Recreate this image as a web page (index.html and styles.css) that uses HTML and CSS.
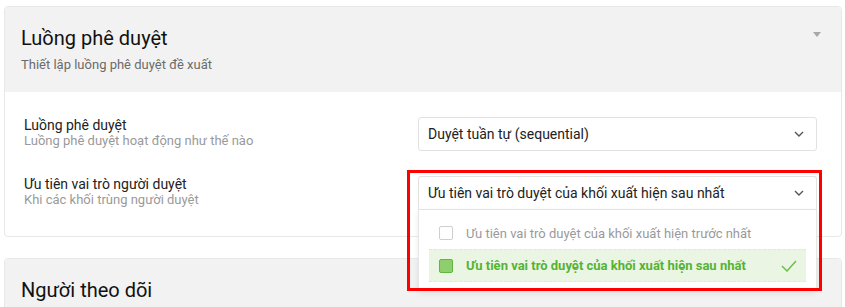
FILE: index.html
```html
<!DOCTYPE html>
<html lang="vi">
<head>
    <meta charset="UTF-8">
    <meta name="viewport" content="width=device-width, initial-scale=1.0">
    <title>Luồng phê duyệt</title>
    <link rel="stylesheet" href="styles.css">
</head>
<body>
    <div class="card">
        <div class="card-header">
            <div>
                <h2>Luồng phê duyệt</h2>
                <p>Thiết lập luồng phê duyệt đề xuất</p>
            </div>
            <span class="caret"></span>
        </div>

        <div class="card-body">
            <div class="field-row">
                <div class="field-label">
                    <div class="label">Luồng phê duyệt</div>
                    <div class="desc">Luồng phê duyệt hoạt động như thế nào</div>
                </div>
                <div class="select">
                    <span>Duyệt tuần tự (sequential)</span>
                    <svg width="10" height="6" viewBox="0 0 10 6"><path d="M1 1l4 4 4-4" fill="none" stroke="#555" stroke-width="1.4"/></svg>
                </div>
            </div>

            <div class="field-row">
                <div class="field-label">
                    <div class="label">Ưu tiên vai trò người duyệt</div>
                    <div class="desc">Khi các khối trùng người duyệt</div>
                </div>
                <div class="select-wrap">
                    <div class="select open">
                        <span>Ưu tiên vai trò duyệt của khối xuất hiện sau nhất</span>
                        <svg width="10" height="6" viewBox="0 0 10 6"><path d="M1 1l4 4 4-4" fill="none" stroke="#555" stroke-width="1.4"/></svg>
                    </div>
                    <div class="dropdown">
                        <div class="option">
                            <span class="check-box"></span>
                            <span class="option-text">Ưu tiên vai trò duyệt của khối xuất hiện trước nhất</span>
                        </div>
                        <div class="option selected">
                            <span class="check-box"></span>
                            <span class="option-text">Ưu tiên vai trò duyệt của khối xuất hiện sau nhất</span>
                            <svg class="tick" width="16" height="12" viewBox="0 0 16 12"><path d="M1 6l5 5 9-10" fill="none" stroke="#6cbf4a" stroke-width="1.5"/></svg>
                        </div>
                    </div>
                    <div class="highlight-box"></div>
                </div>
            </div>
        </div>
    </div>

    <div class="card card-next">
        <div class="card-header">
            <div>
                <h2>Người theo dõi</h2>
            </div>
        </div>
    </div>
</body>
</html>
```

FILE: styles.css
```css
body {
    margin: 0;
    padding: 6px 3px 0 4px;
    font-family: Roboto, "Noto Sans", Arial, sans-serif;
    background: white;
    color: #222;
}
.card {
    border: 1px solid #e8e8e8;
    border-radius: 4px;
    background: white;
}
.card-next {
    margin-top: 21px;
}
.card-header {
    display: flex;
    justify-content: space-between;
    align-items: flex-start;
    background: #f2f2f2;
    padding: 19px 20px 18px 16px;
    border-radius: 4px 4px 0 0;
}
.card-header h2 {
    margin: 0;
    font-size: 20px;
    line-height: 24px;
    font-weight: 400;
    color: #111;
}
.card-header p {
    margin: 6px 0 0;
    font-size: 13px;
    line-height: 18px;
    color: #6b6b6b;
}
.caret {
    margin-top: 6px;
    width: 0;
    height: 0;
    border-left: 4px solid transparent;
    border-right: 4px solid transparent;
    border-top: 5px solid #a8a8a8;
}
.card-body {
    padding: 25px 24px 26px 19px;
    display: flex;
    flex-direction: column;
    gap: 25px;
}
.field-row {
    display: grid;
    grid-template-columns: 1fr 399px;
    align-items: start;
}
.label {
    font-size: 14px;
    line-height: 16px;
    color: #222;
}
.desc {
    font-size: 13px;
    line-height: 16px;
    color: #9a9a9a;
}
.select-wrap {
    position: relative;
}
.select {
    height: 34px;
    box-sizing: border-box;
    border: 1px solid #e2e2e2;
    border-radius: 3px;
    padding: 0 12px 0 9px;
    display: flex;
    align-items: center;
    justify-content: space-between;
    font-size: 14px;
    color: #222;
    background: white;
}
.select.open {
    border-radius: 3px 3px 0 0;
    border-bottom-color: #e6e6e6;
}
.dropdown {
    position: absolute;
    top: 34px;
    left: 0;
    right: 0;
    background: white;
    border: 1px solid #e6e6e6;
    border-top: none;
    box-shadow: 0 2px 6px rgba(0,0,0,0.08);
    padding: 7px 10px 8px;
    z-index: 2;
}
.option {
    height: 32px;
    display: flex;
    align-items: center;
    padding: 0 9px 0 10px;
    font-size: 13px;
    color: #9a9a9a;
}
.option.selected {
    height: 31px;
    background: #eaf6e3;
    border-top: 1px dashed #d9eecd;
    border-bottom: 1px dashed #d9eecd;
    color: #55b333;
    font-weight: 700;
}
.check-box {
    width: 14px;
    height: 14px;
    box-sizing: border-box;
    border: 1px solid #cfcfcf;
    border-radius: 2px;
    margin-right: 13px;
    flex-shrink: 0;
}
.option.selected .check-box {
    background: #8ccf6c;
    border-color: #62b540;
}
.option-text {
    flex: 1;
}
.highlight-box {
    position: absolute;
    left: -11px;
    right: -5px;
    top: -6px;
    height: 121px;
    box-sizing: border-box;
    border: 3px solid #ff0000;
    z-index: 3;
    pointer-events: none;
}
```
